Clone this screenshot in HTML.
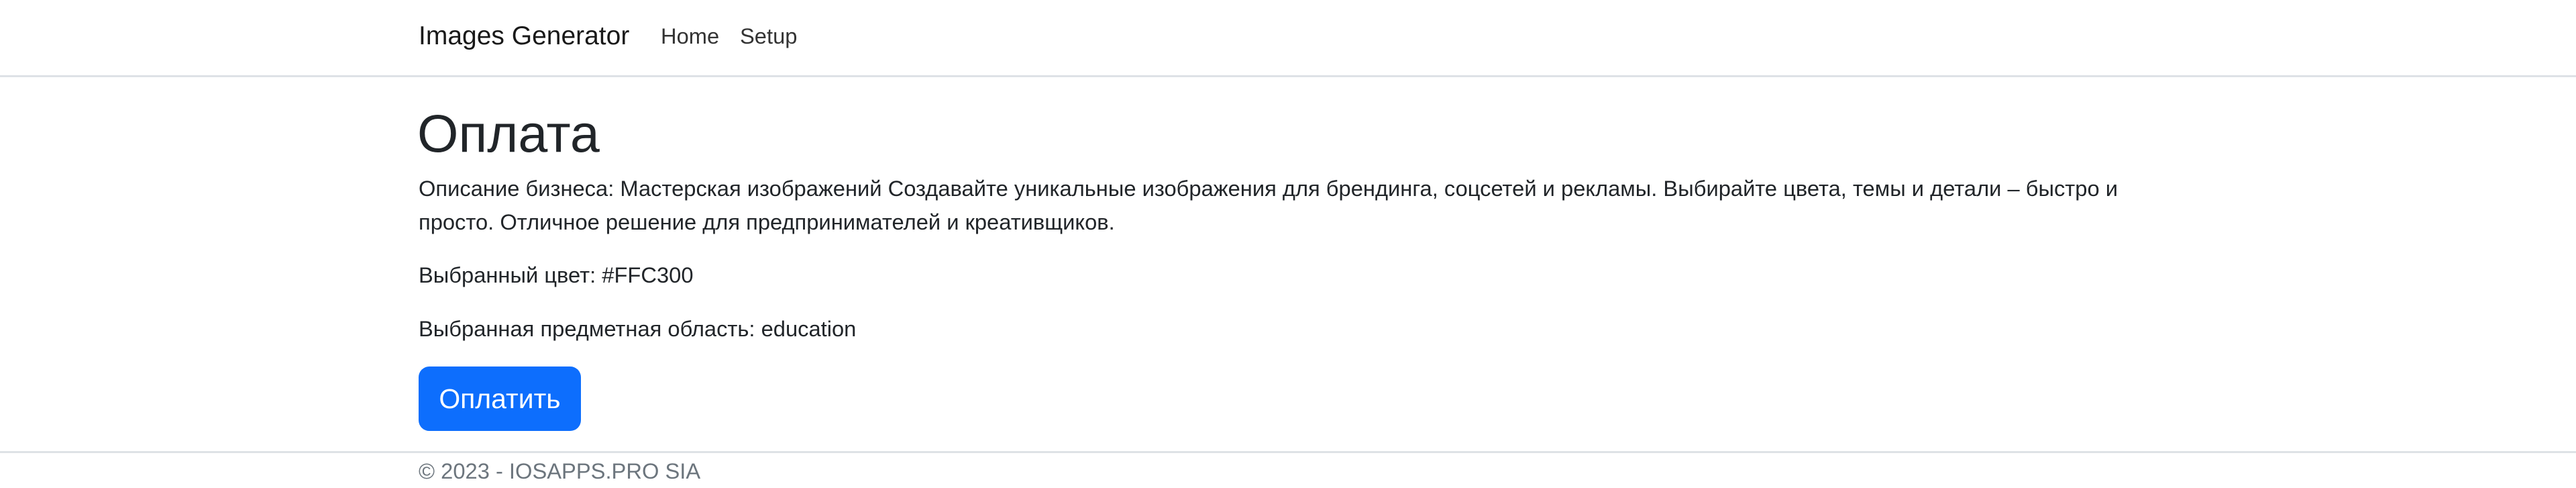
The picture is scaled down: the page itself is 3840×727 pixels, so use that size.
<!DOCTYPE html>
<html><head><meta charset="utf-8"><style>
html,body{margin:0;padding:0;width:3840px;height:724px;overflow:hidden;background:#fff;font-family:"Liberation Sans",sans-serif;color:#212529}
.a{position:absolute;white-space:nowrap}
.nav{position:absolute;left:0;top:0;width:3840px;height:112px;border-bottom:3px solid #dee2e6}
.foot{position:absolute;left:0;top:672px;width:3840px;border-top:3px solid #dee2e6}
</style></head><body>
<div class="nav"></div>
<div class="a" style="left:624px;top:25px;font-size:39px;line-height:58px;color:rgba(0,0,0,.9)">Images Generator</div>
<div class="a" style="left:985px;top:28px;font-size:32.7px;line-height:52px;color:rgba(0,0,0,.8)">Home</div>
<div class="a" style="left:1103px;top:28px;font-size:32.7px;line-height:52px;color:rgba(0,0,0,.8)">Setup</div>
<div class="a" style="left:622px;top:150px;font-size:79px;line-height:98px;font-weight:500">Оплата</div>
<div class="a" style="left:624px;top:256px;width:2592px;white-space:normal;font-size:32.7px;line-height:50px">Описание бизнеса: Мастерская изображений Создавайте уникальные изображения для брендинга, соцсетей и рекламы. Выбирайте цвета, темы и детали – быстро и просто. Отличное решение для предпринимателей и креативщиков.</div>
<div class="a" style="left:624px;top:385px;font-size:32.7px;line-height:50px">Выбранный цвет: #FFC300</div>
<div class="a" style="left:624px;top:465px;font-size:32.7px;line-height:50px">Выбранная предметная область: education</div>
<div class="a" style="left:624px;top:546px;width:242px;height:96px;background:#0d6efd;border-radius:16px;color:#fff;font-size:40.9px;line-height:96px;text-align:center">Оплатить</div>
<div class="foot"></div>
<div class="a" style="left:624px;top:677px;font-size:32.7px;line-height:50px;color:#6c757d">© 2023 - IOSAPPS.PRO SIA</div>
</body></html>
